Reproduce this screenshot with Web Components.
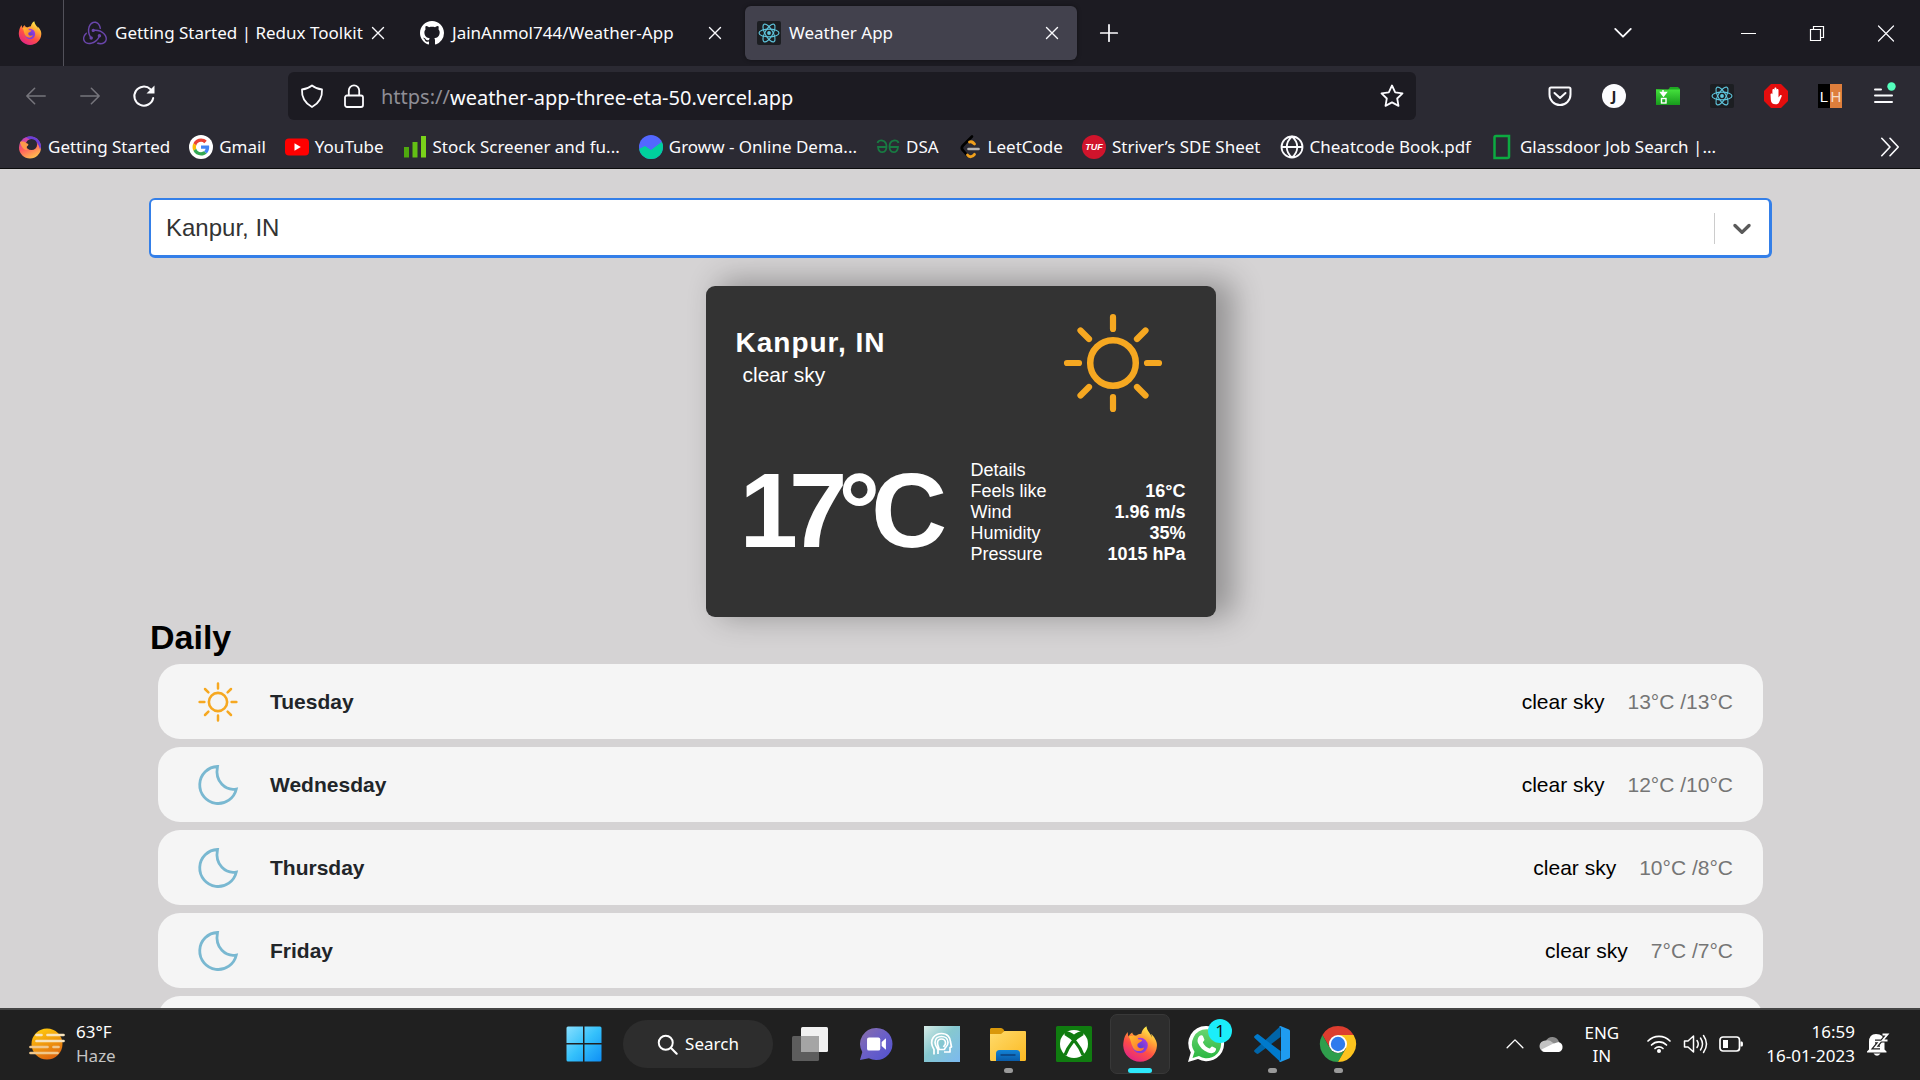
<!DOCTYPE html>
<html lang="en">
<head>
<meta charset="utf-8">
<title>Weather App</title>
<style>
  html, body { margin: 0; height: 100%; overflow: hidden; }
  body { font-family: "Noto Sans", "Open Sans", sans-serif; }
</style>
</head>
<body>
<desk-top></desk-top>
<script>
const FIREFOX = `
  <defs>
    <linearGradient id="body" x1=".8" y1=".05" x2=".25" y2="1"><stop offset="0" stop-color="#fff44f"/><stop offset=".3" stop-color="#ffa436"/><stop offset=".6" stop-color="#ff4f45"/><stop offset="1" stop-color="#e0218a"/></linearGradient>
    <radialGradient id="core" cx=".5" cy=".6" r=".6"><stop offset="0" stop-color="#5b3fd0"/><stop offset="1" stop-color="#a53be0"/></radialGradient>
    <linearGradient id="fox" x1="0" y1="0" x2="1" y2="1"><stop offset="0" stop-color="#ffbd2f"/><stop offset="1" stop-color="#ff6a2b"/></linearGradient>
  </defs>
  <path fill="url(#body)" d="M22 8.500c-.6-1.400-1.700-2.500-2.700-3.100.4.900.6 1.600.7 2.200C18.700 4.500 16.600 3.300 16.300.2c-2.300 1.200-3.200 3.600-3.400 5-1.300.1-2.600.5-3.700 1.300C8.100 6.300 7 5.400 6.800 4.300 5.500 5 4.700 6.300 4.500 7 3.900 6.200 3.800 4.700 3.900 4 2.300 5.400 1.300 8.200 1.100 10 .9 11 .8 12 .8 13c.2 6.100 5.200 10.900 11.300 10.900 6 0 10.900-4.700 11.200-10.700.1-1.600-.4-3.300-1.300-4.700z"/>
  <circle cx="12" cy="13" r="5.200" fill="url(#core)"/>
  <path fill="url(#fox)" d="M4.500 7c1.400-.5 3-.4 4.700-.5 1 .8 1.600 1.700 1.600 2.400 1.500.3 2.900.1 2.600.8-.3.800-1.900 1.300-2.700 1.900-.5.400-.6 1.100-.3 2 .7 1.500 3.400 1.400 4.400.5-.3 3.200-5.500 3.600-7.400.5C5.700 11.500 6 9 4.500 7z"/>`;

const REACT = `<rect width="24" height="24" rx="2" fill="#1c1e22"/><g fill="none" stroke="#5fc6de" stroke-width="1.100"><ellipse cx="12" cy="12" rx="10" ry="3.900"/><ellipse cx="12" cy="12" rx="10" ry="3.900" transform="rotate(60 12 12)"/><ellipse cx="12" cy="12" rx="10" ry="3.900" transform="rotate(120 12 12)"/></g><circle cx="12" cy="12" r="1.900" fill="#5fc6de"/>`;

const SUN = `<g fill="none" stroke="#f6a821" stroke-width="6.200" stroke-linecap="round"><circle cx="50" cy="50" r="22.800" stroke-width="6.500"/><path d="M50 4v12M50 84v12M4 50h12M84 50h12M17.500 17.500l8.500 8.500M74 74l8.500 8.500M82.500 17.500l-8.500 8.500M26 74l-8.500 8.500"/></g>`;

const line = (d, w = 1.5, extra = '') => `<path d="${d}" fill="none" stroke="currentColor" stroke-width="${w}" stroke-linecap="round" stroke-linejoin="round" ${extra}/>`;

const ICONS = {
  firefox: ['0 0 24 24', FIREFOX],
  redux: ['0 0 24 24', `<path fill="#6a46ac" d="M16.634 16.504c.87-.075 1.543-.84 1.500-1.754-.047-.914-.796-1.648-1.709-1.648h-.061a1.710 1.710 0 00-1.648 1.769c.03.479.226.869.494 1.153-1.048 2.038-2.621 3.535-5.005 4.795-1.603.838-3.296 1.154-4.944.929-1.378-.194-2.456-.81-3.116-1.799-.988-1.499-1.078-3.116-.255-4.734.601-1.166 1.499-2.023 2.099-2.443a9.960 9.960 0 01-.42-1.543C-.868 14.408-.416 18.752.932 20.805c1.004 1.498 3.057 2.456 5.304 2.456.599 0 1.230-.044 1.843-.194 3.897-.749 6.848-3.086 8.541-6.532zM21.963 12.772c-2.321-2.727-5.738-4.225-9.634-4.225h-.51c-.253-.554-.837-.899-1.498-.899h-.045c-.943 0-1.678.81-1.647 1.753.03.898.794 1.648 1.708 1.648h.074a1.690 1.690 0 001.499-1.049h.555c2.309 0 4.495.674 6.488 1.992 1.527 1.005 2.622 2.323 3.237 3.896.538 1.288.509 2.547-.045 3.597-.855 1.647-2.294 2.517-4.196 2.517-1.199 0-2.367-.375-2.967-.644-.36.298-.96.793-1.394 1.093 1.318.598 2.652.943 3.940.943 2.922 0 5.093-1.647 5.918-3.236.898-1.798.824-4.824-1.470-7.416zM6.490 17.042c.03.899.793 1.648 1.708 1.648h.06a1.688 1.688 0 001.648-1.768c0-.9-.779-1.647-1.693-1.647h-.06c-.06 0-.149 0-.226.029-1.243-2.098-1.768-4.346-1.572-6.772.12-1.828.72-3.417 1.797-4.735.899-1.124 2.593-1.680 3.746-1.708 3.236-.061 4.585 3.971 4.689 5.574l1.498.45c-.345-4.914-3.400-7.492-6.322-7.492-2.742 0-5.273 1.993-6.293 4.915-1.393 3.896-.479 7.641 1.229 10.638-.149.195-.239.539-.209.868z"/>`],
  github: ['0 0 16 16', `<path fill="#fff" d="M8 0C3.580 0 0 3.580 0 8c0 3.540 2.290 6.530 5.470 7.590.4.070.55-.17.55-.38 0-.19-.01-.82-.01-1.490-2.010.37-2.530-.49-2.690-.94-.09-.23-.48-.94-.82-1.130-.28-.15-.68-.52-.01-.53.63-.01 1.080.58 1.230.82.72 1.210 1.870.87 2.330.66.070-.52.28-.87.51-1.070-1.780-.2-3.640-.89-3.640-3.950 0-.87.31-1.590.82-2.150-.08-.2-.36-1.020.08-2.120 0 0 .67-.21 2.200.82.64-.18 1.320-.27 2-.27s1.360.09 2 .27c1.530-1.040 2.200-.82 2.200-.82.44 1.100.16 1.920.08 2.120.51.56.82 1.270.82 2.150 0 3.070-1.870 3.750-3.650 3.950.29.25.54.73.54 1.480 0 1.070-.01 1.930-.01 2.200 0 .21.15.46.55.38A8.010 8.010 0 0016 8c0-4.420-3.580-8-8-8z"/>`],
  react: ['0 0 24 24', REACT],
  x: ['0 0 24 24', line('M6.500 6.500l11 11M17.500 6.500l-11 11', 1.4)],
  plus: ['0 0 24 24', line('M12 3v18M3 12h18', 1.9)],
  down: ['0 0 24 24', line('M3.500 7.500l8.500 8.500 8.500-8.500', 2)],
  min: ['0 0 24 24', '<path d="M5 12.500h15" stroke="#fff" stroke-width="1"/>'],
  restore: ['0 0 24 24', '<path d="M5.500 8.500h10v11h-10zM8.500 8.500v-3h10v11h-3" fill="none" stroke="#fff" stroke-width="1.200"/>'],
  close: ['0 0 24 24', line('M4.500 5l15 15M19.500 5l-15 15', 1.2)],
  back: ['0 0 24 24', line('M22 12H2M10.500 3.500L2 12l8.500 8.500', 1.7)],
  forward: ['0 0 24 24', line('M2 12h20M13.500 3.500L22 12l-8.500 8.500', 1.7)],
  reload: ['0 0 24 24', line('M21.200 14A9.500 9.500 0 1 1 18.500 5.300', 2) + '<path d="M22.500 1.500v8h-8z" fill="currentColor"/>'],
  shield: ['0 0 24 24', line('M12 1.500c3 2.500 6 3.600 10 4 .5 8-3.500 14-10 17.500C5.500 19.500 1.500 13.500 2 5.500c4-.4 7-1.500 10-4z', 1.8)],
  lock: ['0 0 24 24', line('M5 11.500h14a2 2 0 0 1 2 2v7.500a2 2 0 0 1-2 2H5a2 2 0 0 1-2-2v-7.500a2 2 0 0 1 2-2zM6.800 11.500V6.500a5.200 5.200 0 0 1 10.400 0v5', 1.8)],
  star: ['0 0 24 24', line('M12 1.500l3.200 6.800 7.300 1-5.300 5.200 1.300 7.400L12 18.400l-6.500 3.500 1.300-7.400L1.500 9.300l7.300-1z', 1.8)],
  pocket: ['0 0 24 24', line('M3 3.500h18a1.500 1.500 0 0 1 1.500 1.500v5.500a10.500 10.500 0 0 1-21 0V5A1.500 1.500 0 0 1 3 3.500zM6.500 9l5.500 5 5.500-5', 2)],
  profile: ['0 0 24 24', '<circle cx="12" cy="12" r="12" fill="#fbfbfe"/><text x="12" y="17" text-anchor="middle" font-family="Noto Sans" font-size="15" font-weight="700" fill="#1c1b22">J</text>'],
  download: ['0 0 24 24', '<defs><linearGradient id="g" x2="0" y2="1"><stop offset="0" stop-color="#44e03c"/><stop offset="1" stop-color="#179a1c"/></linearGradient></defs><path d="M0 5l12 1 2-3h8l2 2v15.500H0z" fill="#1ea822"/><path d="M0 5.500h24v15.500H0z" fill="url(#g)"/><path d="M7 6v5M4.800 8.500L7.500 12l2.700-3.500z" fill="#fff" stroke="#fff" stroke-width="1.500"/><rect x="5.500" y="14.500" width="4.500" height="4.500" fill="none" stroke="#fff" stroke-width="1.400"/>'],
  adblock: ['0 0 24 24', '<path d="M7 0h10l7 7v10l-7 7H7l-7-7V7z" fill="#e40d0d"/><path d="M6.500 10.500c0-1.400 1.900-1.400 1.900 0V6c0-1.500 2-1.500 2 0V4.500c0-1.500 2.100-1.500 2.100 0V6c0-1.500 2-1.500 2 0v7.500l1.500-2c.9-1 2.200-.3 1.700.8l-2.600 6c-.7 1.400-1.600 2-3.500 2-3 0-4.600-1.400-4.800-4.500z" fill="#fff"/>'],
  lh: ['0 0 24 24', '<path fill="#000" d="M0 0h12v24H0z"/><path fill="#de7e3c" d="M12 0h12v24H12z"/><text x="6" y="18" text-anchor="middle" font-family="Liberation Sans" font-size="15" fill="#fff">L</text><text x="18" y="18" text-anchor="middle" font-family="Liberation Sans" font-size="15" fill="#f6dcc8">H</text>'],
  menu: ['0 0 24 24', line('M3 5.500h6M3 11.500h17M3 18h17', 2) + '<circle cx="19.500" cy="2.500" r="4.200" fill="#54ffbd"/>'],
  firefoxOld: ['0 0 24 24', '<defs><linearGradient id="a" x1=".2" y1="0" x2=".7" y2="1"><stop offset="0" stop-color="#b13bd0"/><stop offset=".45" stop-color="#ff5a5f"/><stop offset="1" stop-color="#ffc44d"/></linearGradient></defs><circle cx="12" cy="12.500" r="11" fill="url(#a)"/><path d="M8 2.500c6-3.500 14 1 15 8 .2 1-.3 3-1 4-1-5-4-9-9-9.500z" fill="#6b3fd6"/><circle cx="13.500" cy="9.500" r="5.600" fill="#2b2a33"/><path d="M2 7c2-.8 5-.5 6 1 2 .5 3 1.500 2 2.500-2 1-2 3 0 4.500-4 .5-7-3-8-8z" fill="#ff9a4a"/>'],
  google: ['0 0 48 48', '<circle cx="24" cy="24" r="24" fill="#fff"/><g transform="translate(7 7) scale(.71)"><path fill="#EA4335" d="M24 9.500c3.540 0 6.710 1.220 9.210 3.600l6.850-6.850C35.900 2.380 30.470 0 24 0 14.620 0 6.510 5.380 2.560 13.220l7.980 6.190C12.430 13.720 17.740 9.500 24 9.500z"/><path fill="#4285F4" d="M46.980 24.550c0-1.570-.15-3.090-.38-4.550H24v9.020h12.940c-.58 2.960-2.260 5.480-4.780 7.180l7.730 6c4.510-4.180 7.090-10.360 7.090-17.650z"/><path fill="#FBBC05" d="M10.530 28.590c-.48-1.450-.76-2.990-.76-4.590s.27-3.140.76-4.590l-7.980-6.190C.92 16.460 0 20.120 0 24c0 3.880.92 7.540 2.560 10.780l7.970-6.190z"/><path fill="#34A853" d="M24 48c6.480 0 11.930-2.130 15.890-5.810l-7.730-6c-2.150 1.450-4.920 2.300-8.160 2.300-6.260 0-11.570-4.220-13.470-9.910l-7.980 6.190C6.510 42.620 14.620 48 24 48z"/></g>'],
  youtube: ['0 0 24 24', '<rect y="3.500" width="24" height="17" rx="4" fill="#f00"/><path d="M9.500 8.300v7.400l6.300-3.700z" fill="#fff"/>'],
  bars: ['0 0 24 24', '<path fill="#4fa90e" d="M1 12h5v10.500H1z"/><path fill="#63bf14" d="M9.500 7h5v15.500h-5z"/><path fill="#7ad21a" d="M18 1h5v21.500h-5z"/>'],
  groww: ['0 0 24 24', '<defs><clipPath id="c"><circle cx="12" cy="12" r="12"/></clipPath></defs><g clip-path="url(#c)"><path fill="#5367ff" d="M0 0h24v24H0z"/><path fill="#00d09c" d="M0 14l6-3 6 4L24 6v18H0z"/></g>'],
  gfg: ['0 0 24 24', '<g fill="none" stroke="#187a42" stroke-width="1.800"><path d="M1.500 8c1-4 9-3.500 9 3.500s-8 8-8.500.5h8.500M22.500 8c-1-4-9-3.500-9 3.500s8 8 8.500.5H13.500"/></g>'],
  leet: ['0 0 24 24', '<g fill="none" stroke-linecap="round" stroke-width="2.600"><path d="M14 1.500L5 10.500c-1.500 1.500-1.500 3.500 0 5l4 4.500" stroke="#000"/><path d="M11.500 7c2-1 3 0 5 2M9.500 20c2 2.800 5 2 7-.7" stroke="#f0a01c" stroke-width="2.800"/><path d="M10.500 14h10" stroke="#b3b3b3"/></g>'],
  tuf: ['0 0 24 24', '<circle cx="12" cy="12" r="12" fill="#d0142c"/><text x="12" y="15" text-anchor="middle" font-family="Liberation Sans" font-size="9" font-weight="700" font-style="italic" fill="#fff">TUF</text>'],
  globe: ['0 0 24 24', line('M1.500 12a10.500 10.500 0 1 0 21 0 10.500 10.500 0 1 0-21 0zM1.500 12h21M12 1.500c-7 6-7 15 0 21M12 1.500c7 6 7 15 0 21', 1.8)],
  glassdoor: ['0 0 24 24', '<path d="M4.500 6V2.500Q4.500 1 6 1H19v17M4.500 5.500V23H17.500Q19 23 19 21.500V18" fill="none" stroke="#0caa41" stroke-width="2.500"/>'],
  more: ['0 0 24 24', line('M3 2.500l9 9.500-9 9.500M12 2.500l9 9.500-9 9.500', 1.8)],
  chev: ['0 0 20 20', '<path fill="#5a5a5a" d="M4.516 7.548c.436-.446 1.043-.481 1.576 0L10 11.295l3.908-3.747c.533-.481 1.141-.446 1.574 0 .436.445.408 1.197 0 1.615l-4.695 4.502a1.095 1.095 0 0 1-1.576 0L4.516 9.163c-.409-.418-.436-1.170 0-1.615z"/>'],
  sun: ['0 0 100 100', SUN],
  moon: ['0 0 40 40', '<path d="M19.500 1.500A18.500 18.500 0 1 0 38.300 24C28 26 16.500 17 19.500 1.500z" fill="none" stroke="#79b8d1" stroke-width="2.800" stroke-linejoin="miter"/>'],
  haze: ['0 0 36 36', '<defs><linearGradient id="h" x1=".3" y1="0" x2=".7" y2="1"><stop offset="0" stop-color="#ffc90e"/><stop offset="1" stop-color="#dd6210"/></linearGradient></defs><circle cx="18" cy="18" r="15.500" fill="url(#h)"/><g stroke="#f7e3bd" stroke-width="2.700" stroke-linecap="round"><path d="M7.500 9h5M18.500 9h16M7.500 15h27"/><path d="M1.500 21h17M24.500 21h5M1.500 27h27" stroke="#f0c78c"/></g>'],
  win: ['0 0 36 36', '<defs><linearGradient id="w" gradientUnits="userSpaceOnUse" x1="0" y1="0" x2="36" y2="36"><stop offset="0" stop-color="#8ae0ff"/><stop offset=".5" stop-color="#35c1fb"/><stop offset="1" stop-color="#0d8df5"/></linearGradient></defs><path fill="url(#w)" d="M2 .5h15v16.500H.5V2A1.500 1.500 0 0 1 2 .5zM18.500.5H34A1.500 1.500 0 0 1 35.500 2v15h-17zM.5 18.500H17v17H2A1.500 1.500 0 0 1 .5 34zM18.500 18.500h17V34a1.500 1.500 0 0 1-1.500 1.500H18.500z"/>'],
  search: ['0 0 24 24', line('M16 16l6.500 6.500', 2.4) + '<circle cx="10" cy="10" r="8" fill="none" stroke="#fff" stroke-width="2.200"/>'],
  taskview: ['0 0 36 36', '<rect x="9" y="1" width="27" height="25" rx="1.500" fill="#f1f1f1"/><rect y="10" width="27" height="25" rx="1.500" fill="#5d5d5d"/><path d="M9 10h18v16H9z" fill="#a5a5a5"/>'],
  chat: ['0 0 36 36', '<defs><linearGradient id="t" x1="0" x2="1" y2="1"><stop offset="0" stop-color="#8a6fa8"/><stop offset=".5" stop-color="#6a5fc8"/><stop offset="1" stop-color="#5052cf"/></linearGradient></defs><path fill="url(#t)" d="M18.500 1a17 17 0 1 1-8 32L1 35l2.500-8.500A17 17 0 0 1 18.500 1z"/><rect x="8.500" y="11" width="14" height="14" rx="2" fill="#fff"/><path fill="#fff" d="M24 16l4.500-4v12L24 20z"/>'],
  head: ['0 0 36 36', '<defs><linearGradient id="q" x2="1" y2="1"><stop offset="0" stop-color="#d7ebe6"/><stop offset=".45" stop-color="#86c8cf"/><stop offset="1" stop-color="#7bb9f0"/></linearGradient></defs><path fill="url(#q)" d="M0 0h36v36H0z"/><g fill="none" stroke="#fff" stroke-width="1.700" stroke-linejoin="round"><path d="M10 28.500v-5C3.500 13 12 7.500 17.500 7.500c6 0 9 4 9 8.500l1 5-1.500.5v4.500h-6"/><path d="M14 28v-4c0-1-3-4-3-7.500 0-4 3-6 6.500-6s6.500 2 6.500 6-3.500 5-3.500 7h-5.500c0-2-1.500-4-1.500-6.500a4 4 0 0 1 8 0c0 2-1.500 3-2 4"/></g>'],
  folder: ['0 0 36 36', '<defs><linearGradient id="f" x2="1" y2="1"><stop offset="0" stop-color="#ffdb6b"/><stop offset="1" stop-color="#fbb922"/></linearGradient><linearGradient id="b" x2="0" y2="1"><stop offset="0" stop-color="#1283d6"/><stop offset="1" stop-color="#0a5ba8"/></linearGradient></defs><path fill="#d9980b" d="M1 2h10q1.500 0 2.500 1.500L15 6v5H0V3z"/><path fill="url(#f)" d="M0 8h11l3.500-3H35q1 0 1 1v27.500Q36 35 34.500 35h-33Q0 35 0 33.500z"/><path fill="url(#b)" d="M6 35v-7.500Q6 24 9.500 24h17q3.500 0 3.500 3.500V35z"/><path d="M11 29h14" stroke="#0c3f7a" stroke-width="1.400" stroke-linecap="round"/>'],
  xbox: ['0 0 36 36', '<rect width="36" height="36" rx="1.500" fill="#107c10"/><circle cx="18" cy="18" r="14" fill="#fff"/><path d="M8.500 7c3.500-1 7 1.500 9.500 3.500C20.500 8.500 24 6 27.500 7M9 7.500c8 4 15 13 18 21.500M27 7.500c-8 4-15 13-18 21.500" fill="none" stroke="#107c10" stroke-width="3.200"/>'],
  whatsapp: ['0 0 36 36', '<defs><linearGradient id="v" x2="0" y2="1"><stop offset="0" stop-color="#67d56f"/><stop offset="1" stop-color="#2cb742"/></linearGradient></defs><path fill="#fff" d="M18.500 0a17.600 17.600 0 1 1-8.500 33L0 36l2.800-9.500A17.600 17.600 0 0 1 18.500 0z"/><path fill="url(#v)" d="M18.500 3.200A14.500 14.500 0 1 1 11 30l-6.500 2 2-6.200A14.500 14.500 0 0 1 18.500 3.200z"/><path fill="#fff" d="M12.500 9.500c1-.4 2-.3 2.400.6l1.500 3.500c.3 1-1.500 2.300-1.500 2.900 1.500 3 3.500 4.700 6.600 6 .8 0 1.800-2.400 2.800-2l3.400 1.700c.9.600 0 2.800-1 3.800-1.500 1.400-4 1.500-6.700.4-4.800-1.900-8-5-10-9.500-1.200-3 .5-6.800 2.500-7.400z"/>'],
  vscode: ['0 0 36 36', '<path fill="#0065a9" d="M26.500 0v11L4.500 27.500q-1 .8-2 0L.6 26q-1-1 0-2z"/><path fill="#007acc" d="M26.500 36V25L4.500 8.500q-1-.8-2 0L.6 10q-1 1 0 2z"/><path fill="#1f9cf0" d="M26.500 0l8.500 3.500q1 .5 1 1.600v25.800q0 1.100-1 1.600L26.500 36q-.5 0-1.500-1 2 0 2-2V3q0-2-2-2 1-1 1.500-1z"/>'],
  chrome: ['0 0 36 36', '<path fill="#dd3d2f" d="M18 9h15.600A18 18 0 0 0 2.400 9l7.800 13.500z"/><path fill="#2f9e4c" d="M2.400 9A18 18 0 0 0 18 36l7.800-13.500A9 9 0 0 1 10.200 22.500z"/><path fill="#fcc31e" d="M33.600 9H18l7.800 13.500L18 36A18 18 0 0 0 33.600 9z"/><circle cx="18" cy="18" r="9" fill="#fff"/><circle cx="18" cy="18" r="7.200" fill="#2f7bed"/>'],
  up: ['0 0 24 24', line('M1.500 17L12 6.500 22.500 17', 1.8)],
  cloud: ['0 0 24 24', '<path fill="#8b8b8b" d="M6 9a7 7 0 0 1 13 1l-7 5z"/><path fill="#c3c3c3" d="M5.500 8.500q4-1 7 2l6 4L5 20a5.700 5.700 0 0 1 .5-11.500z"/><path fill="#fff" d="M1.500 17.500l11-5.500 6-2A5.200 5.200 0 0 1 19 20H5q-2.500 0-3.500-2.500z"/>'],
  wifi: ['0 0 24 24', line('M1 9a15.500 15.500 0 0 1 22 0M4.500 13a10.500 10.500 0 0 1 15 0M8 16.500a5.600 5.600 0 0 1 8 0', 1.7) + '<circle cx="12" cy="19" r="2" fill="#fff"/>'],
  volume: ['0 0 24 24', line('M1.500 9H5l5.500-5v16L5 15H1.500zM14 8.500q2.500 3.500 0 7M17.500 6q4 6 0 12M20.500 3.500q6 8.500 0 17', 1.500)],
  battery: ['0 0 24 24', '<rect x="1" y="5" width="19.500" height="14" rx="3" fill="none" stroke="#fff" stroke-width="1.700"/><path d="M4 8h5v8H4zM21.500 9.500H23q1 0 1 2.500t-1 2.500h-1.500z" fill="#fff"/>'],
  bell: ['0 0 24 24', '<path fill="#fff" d="M3 17.500V10Q3 2 10 2q8 0 8.500 8v7.500l2 2v1H1v-1zM7.500 21.500h7q-3.500 4.500-7 0z"/><path d="M9 9.500h5l-5 6h5M16.500 2.500h5l-5 6h5" fill="none" stroke="#202020" stroke-width="4"/><path d="M16.500 2.500h5l-5 6h5" fill="none" stroke="#fff" stroke-width="1.800"/><path d="M9 9.500h5l-5 6h5" fill="none" stroke="#fff" stroke-width="1.500"/>']
};

class Base extends HTMLElement {
  connectedCallback() {
    if (this.shadowRoot) return;
    this.attachShadow({ mode: 'open' }).innerHTML = `<style>*{box-sizing:border-box}button,input,select{font:inherit;color:inherit;background:none;border:0;padding:0;margin:0}${this.css()}</style>${this.html()}`;
  }
  at(n) { return this.getAttribute(n) || ''; }
}
const define = (name, css, html) => customElements.define(name, class extends Base {
  css() { return typeof css === 'function' ? css(this) : css; }
  html() { return typeof html === 'function' ? html(this) : html; }
});

define('ui-icon',
  e => `:host{display:inline-block;flex:none;width:${e.at('size') || 24}px;height:${e.at('size') || 24}px}svg{display:block;width:100%;height:100%;overflow:visible}`,
  e => `<svg viewBox="${ICONS[e.at('name')][0]}" aria-hidden="true">${ICONS[e.at('name')][1]}</svg>`);

define('icon-button',
  `:host{display:flex;flex:none;width:54px;height:48px}:host([kind=window]){width:69px}:host([kind=field]){width:42px}:host([off]){color:#76757c}
   button{flex:1;display:flex;align-items:center;justify-content:center}`,
  e => `<button type="button" aria-label="${e.at('label')}"><ui-icon name="${e.at('icon')}" size="${e.at('size') || 24}"></ui-icon></button>`);

define('browser-tab',
  `:host{box-sizing:border-box;display:flex;align-items:center;flex:1 1 0;min-width:0;height:54px;padding:0 13px 0 12px;gap:8px;border-radius:6px;font-size:17px;line-height:24px}
   :host([active]){background:#42414d;box-shadow:0 0 4px rgba(0,0,0,.4)}
   span{flex:1;min-width:0;white-space:nowrap}
   button{display:flex}`,
  e => `<ui-icon name="${e.at('icon')}"></ui-icon><span><slot></slot></span><button type="button" aria-label="Close tab"><ui-icon name="x"></ui-icon></button>`);

define('tab-strip',
  `:host{display:flex;align-items:center;height:66px;background:#1c1b22;color:#fbfbfe}
   .view{display:flex;align-items:center;justify-content:center;align-self:stretch;width:64px;padding-right:4px;border-right:1px solid #52515a;margin-right:7px}
   .tabs{display:flex;flex:0 1 1006px;gap:5px}
   .add{margin-left:5px}
   .window{display:flex;margin-left:auto}
   .list{margin-right:63px}`,
  `<div class="view"><ui-icon name="firefox"></ui-icon></div>
   <div class="tabs"><browser-tab icon="redux">Getting Started | Redux Toolkit</browser-tab><browser-tab icon="github">JainAnmol744/Weather-App</browser-tab><browser-tab icon="react" active>Weather App</browser-tab></div>
   <icon-button class="add" icon="plus" size="22" label="New tab"></icon-button>
   <div class="window"><icon-button class="list" icon="down" size="22" label="List all tabs"></icon-button><icon-button kind="window" icon="min" label="Minimize"></icon-button><icon-button kind="window" icon="restore" label="Restore"></icon-button><icon-button kind="window" icon="close" label="Close"></icon-button></div>`);

define('nav-bar',
  `:host{display:flex;align-items:center;height:60px;padding:0 9px;color:#fbfbfe}
   .group{display:flex}
   form{flex:1;display:flex;align-items:center;height:48px;margin:0 117px;padding:0 3px;border-radius:6px;background:#1c1b22;font-size:20px;line-height:28px}
   label{color:#8f8e96;padding:2px 0 0 6px}
   input{flex:1;min-width:0;height:30px;padding-top:2px;outline:0}`,
  `<div class="group"><icon-button off icon="back" size="22" label="Back"></icon-button><icon-button off icon="forward" size="22" label="Forward"></icon-button><icon-button icon="reload" label="Reload"></icon-button></div>
   <form><icon-button kind="field" icon="shield" label="Tracking protection"></icon-button><icon-button kind="field" icon="lock" label="Site information"></icon-button><label for="url">https://</label><input id="url" value="weather-app-three-eta-50.vercel.app"><icon-button kind="field" icon="star" label="Bookmark this page"></icon-button></form>
   <div class="group"><icon-button icon="pocket" label="Pocket"></icon-button><icon-button icon="profile" label="Account"></icon-button><icon-button icon="download" label="Downloads"></icon-button><icon-button icon="react" label="React tools"></icon-button><icon-button icon="adblock" label="Ad blocker"></icon-button><icon-button icon="lh" label="LH"></icon-button><icon-button icon="menu" label="Menu"></icon-button></div>`);

define('book-mark',
  `:host{display:block;flex:none}a{display:flex;align-items:center;gap:6px;color:inherit;text-decoration:none;white-space:nowrap;font-size:17px;line-height:24px}`,
  e => `<a href="#"><ui-icon name="${e.at('icon')}"></ui-icon><slot></slot></a>`);

define('bookmark-bar',
  `:host{box-sizing:border-box;display:flex;align-items:center;gap:19px;height:42px;padding:0 6px 0 18px;color:#fbfbfe}
   icon-button{margin-left:auto;width:48px;height:42px}`,
  `<book-mark icon="firefoxOld">Getting Started</book-mark><book-mark icon="google">Gmail</book-mark><book-mark icon="youtube">YouTube</book-mark><book-mark icon="bars">Stock Screener and fu...</book-mark><book-mark icon="groww">Groww - Online Dema...</book-mark><book-mark icon="gfg">DSA</book-mark><book-mark icon="leet">LeetCode</book-mark><book-mark icon="tuf">Striver’s SDE Sheet</book-mark><book-mark icon="globe">Cheatcode Book.pdf</book-mark><book-mark icon="glassdoor">Glassdoor Job Search |...</book-mark><icon-button icon="more" size="22" label="More bookmarks"></icon-button>`);

define('city-select',
  `:host{display:grid;color:#333}
   select,.mark{grid-area:1/1}
   select{appearance:none;width:100%;height:60px;padding:0 60px 0 15px;border:2px solid #347fe8;border-width:2px 3px 3px 2px;border-radius:6px;background:#fff;font-size:24px;line-height:28px;outline:0}
   .mark{justify-self:end;align-self:center;display:flex;align-items:center;justify-content:center;width:58px;height:31px;padding-right:3px;border-left:1px solid #ccc;pointer-events:none}`,
  `<select aria-label="City"><option>Kanpur, IN</option></select><div class="mark"><ui-icon name="chev" size="30"></ui-icon></div>`);

define('weather-card',
  `:host{box-sizing:border-box;display:block;width:510px;margin:28px auto 0;padding:4px 30px 46px;border-radius:9px;background:#333;color:#fff;box-shadow:15px -3px 30px 3px rgba(0,0,0,.3)}
   .top{display:flex;justify-content:space-between;height:146px}
   .icon{display:flex;align-items:center;justify-content:center;width:146px}
   h2{margin:37px 0 0;font-size:28px;line-height:32px;letter-spacing:1px}
   p{margin:4px 0 0 7px;font-size:21px;line-height:24px}
   .bottom{display:flex;align-items:center;justify-content:space-between;margin-top:16px}
   .temp{padding:0 0 2px 4px;font-size:105px;line-height:117px;font-weight:700;letter-spacing:-9px}
   .details{width:215px;padding-top:2px}
   table{width:100%;border-collapse:collapse;font-size:18px;line-height:21px}
   th{padding:0;font-weight:400;text-align:left}td{padding:0;text-align:right;font-weight:700}`,
  `<div class="top"><div><h2>Kanpur, IN</h2><p>clear sky</p></div><div class="icon"><ui-icon name="sun" size="100"></ui-icon></div></div>
   <div class="bottom"><div class="temp">17°C</div><div class="details"><table><tr><th colspan="2">Details</th></tr><tr><th>Feels like</th><td>16°C</td></tr><tr><th>Wind</th><td>1.96 m/s</td></tr><tr><th>Humidity</th><td>35%</td></tr><tr><th>Pressure</th><td>1015 hPa</td></tr></table></div></div>`);

define('day-row',
  `:host{display:block}button{display:flex;align-items:center;width:100%;height:75px;padding:0 30px;border-radius:22px;background:#f5f5f5;font-size:21px;line-height:24px;color:#000}
   .icon{display:flex;justify-content:center;width:60px;margin-right:22px}
   b{flex:1;text-align:left;color:#212529}
   .temps{margin-left:23px;color:#757575}`,
  e => e.at('day') ? `<button type="button"><span class="icon"><ui-icon name="${e.at('icon')}" size="40"></ui-icon></span><b>${e.at('day')}</b><span>clear sky</span><span class="temps">${e.at('temps')}</span></button>` : `<button type="button" aria-label="Next day"></button>`);

define('weather-page',
  `:host{display:block;overflow:hidden;padding:29px 148px 0 149px;background:#d5d3d4;font-family:"Liberation Sans",Arial,sans-serif}
   h1{margin:0 0 6px 1px;font-size:34px;line-height:41px;color:#000}
   .list{display:flex;flex-direction:column;gap:8px;padding:0 9px}`,
  `<city-select></city-select><weather-card></weather-card><h1>Daily</h1>
   <div class="list"><day-row icon="sun" day="Tuesday" temps="13°C /13°C"></day-row><day-row icon="moon" day="Wednesday" temps="12°C /10°C"></day-row><day-row icon="moon" day="Thursday" temps="10°C /8°C"></day-row><day-row icon="moon" day="Friday" temps="7°C /7°C"></day-row><day-row></day-row></div>`);

define('task-app',
  `:host{display:flex;align-items:center;justify-content:center;width:66px;height:66px;position:relative}
   button{display:flex;align-items:center;justify-content:center;width:60px;height:60px;border-radius:7px}
   :host([active]) button{background:#2d2d2d;border:1px solid #383838}
   i{position:absolute;bottom:4px;width:9px;height:5px;border-radius:3px;background:#9a9a9a}
   :host([active]) i{width:24px;background:#2ee8fa}
   b{position:absolute;left:35px;top:8px;width:24px;height:24px;border-radius:50%;background:#1beefa;color:#111;font:400 17px/24px "Noto Sans",sans-serif;text-align:center}`,
  e => `<button type="button" aria-label="${e.at('label')}"><ui-icon name="${e.at('icon')}" size="${e.at('size') || 36}"></ui-icon></button>${e.hasAttribute('open') || e.hasAttribute('active') ? '<i></i>' : ''}${e.at('badge') ? `<b>${e.at('badge')}</b>` : ''}`);

define('task-bar',
  `:host{box-sizing:border-box;display:grid;grid-template-columns:1fr auto 1fr;height:72px;padding-bottom:2px;align-items:center;background:#202020;border-top:2px solid #444;color:#fff;font-size:17px;line-height:24px}
   .weather{display:flex;align-items:center;gap:11px;padding-left:29px}
   .weather small{display:block;font-size:17px;color:#c4c4c4}
   .apps{display:flex;align-items:center;padding-left:2px}
   .search{display:flex;align-items:center;justify-content:center;gap:7px;width:150px;height:48px;margin:0 4px 0 6px;border-radius:24px;background:#2d2d2d}
   .tray{display:flex;align-items:center;justify-content:flex-end;padding-right:30px}
   .lang{margin:0 28px 0 21px;text-align:center;line-height:23px}.net{display:flex;gap:12px}
   .cloud{margin-left:16px}
   .time{margin:0 11px 0 23px;text-align:right}`,
  `<div class="weather"><ui-icon name="haze" size="36"></ui-icon><div>63°F<small>Haze</small></div></div>
   <div class="apps"><task-app icon="win" label="Start"></task-app><button class="search" type="button"><ui-icon name="search" size="21"></ui-icon>Search</button><task-app icon="taskview" label="Task view"></task-app><task-app icon="chat" label="Chat" size="34"></task-app><task-app icon="head" label="Assistant"></task-app><task-app icon="folder" label="File Explorer" open></task-app><task-app icon="xbox" label="Xbox"></task-app><task-app icon="firefox" label="Firefox" active></task-app><task-app icon="whatsapp" label="WhatsApp" badge="1"></task-app><task-app icon="vscode" label="Visual Studio Code" open></task-app><task-app icon="chrome" label="Chrome" open></task-app></div>
   <div class="tray"><ui-icon name="up" size="18"></ui-icon><ui-icon class="cloud" name="cloud"></ui-icon><div class="lang">ENG<br>IN</div><div class="net"><ui-icon name="wifi"></ui-icon><ui-icon name="volume"></ui-icon><ui-icon name="battery"></ui-icon></div><div class="time">16:59<br>16-01-2023</div><ui-icon name="bell"></ui-icon></div>`);

define('desk-top',
  `:host{display:flex;flex-direction:column;height:100vh}
   header{flex:none;background:#2b2a33;border-bottom:1px solid #0c0c0d}
   weather-page{flex:1;min-height:0}
   task-bar{flex:none}`,
  `<header><tab-strip></tab-strip><nav-bar></nav-bar><bookmark-bar></bookmark-bar></header><weather-page></weather-page><task-bar></task-bar>`);
</script>
</body>
</html>
